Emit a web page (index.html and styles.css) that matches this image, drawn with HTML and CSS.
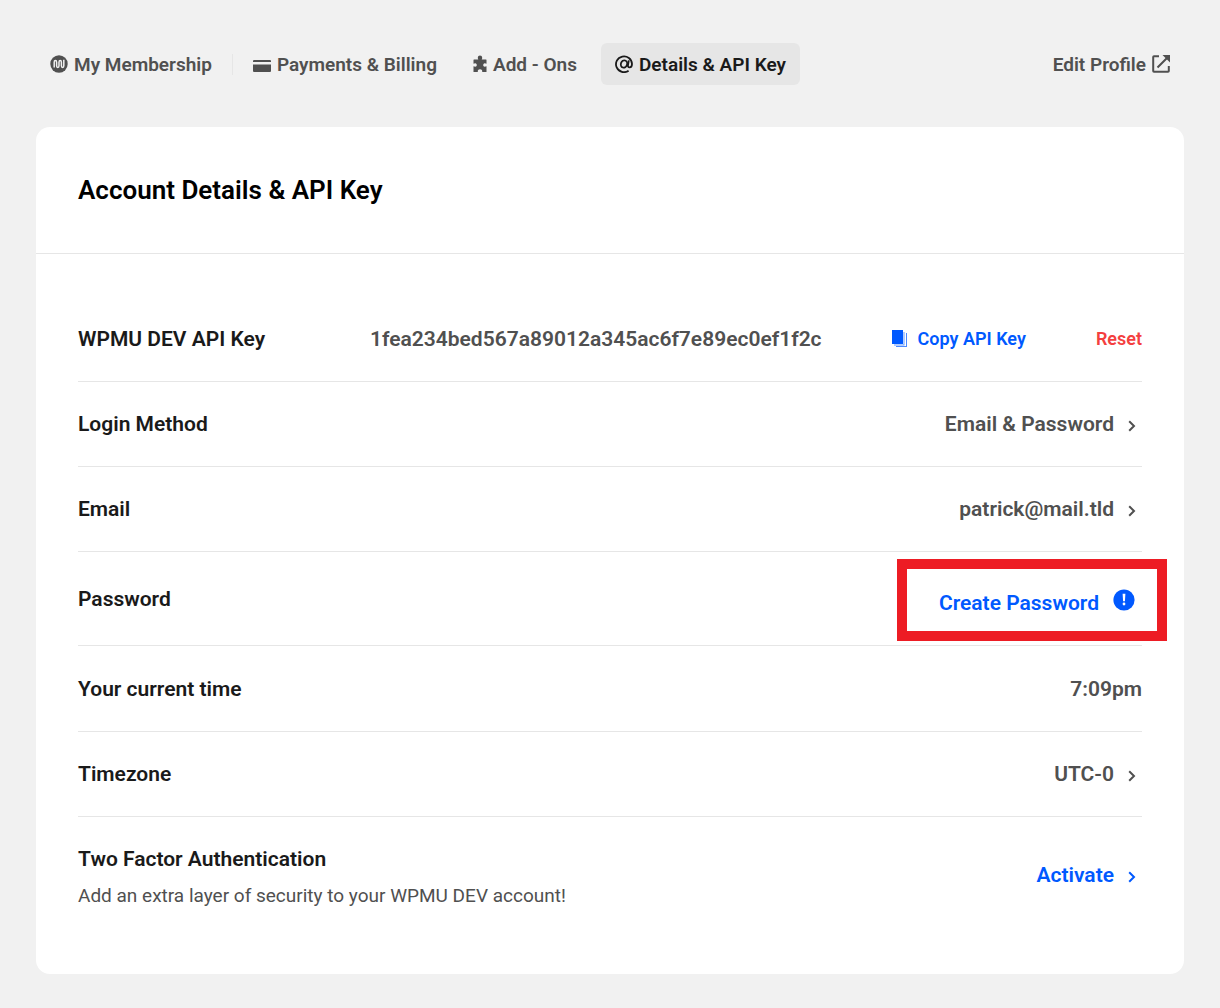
FILE: index.html
```html
<!DOCTYPE html>
<html lang="en">
<head>
    <meta charset="UTF-8">
    <meta name="viewport" content="width=device-width, initial-scale=1.0">
    <title>Account Details &amp; API Key</title>
    <link rel="stylesheet" href="styles.css">
</head>
<body>
    <nav class="navbar">
        <a class="tab" href="#membership">
            <svg width="18" height="18" viewBox="0 0 18 18"><circle cx="9" cy="9" r="8.7" fill="currentColor"/><path d="M4.2 12.5V7.2q0-1.7 1.2-1.7t1.2 1.7v3.6q0 1.7 1.2 1.7T9 10.800V7.200q0-1.700 1.200-1.700t1.200 1.700v3.600q0 1.700 1.200 1.700t1.200-1.700V4.800" fill="none" stroke="#f1f1f1" stroke-width="1.500"/></svg>
            My Membership
        </a>
        <span class="divider"></span>
        <a class="tab" href="#billing">
            <svg width="18" height="18" viewBox="0 0 18 18"><path d="M1 5h16q1 0 1 1v1H0V6q0-1 1-1zM0 9.500h18V16q0 1-1 1H1q-1 0-1-1z" fill="currentColor"/></svg>
            Payments &amp; Billing
        </a>
        <a class="tab tab-addons" href="#addons">
            <svg width="14" height="18" viewBox="0 0 14 18"><path d="M5.300 4.600Q4.800 3.800 4.800 2.400 4.900.4 7 .4t2.200 2q0 1.400-.5 2.200H13q.5 0 .5.500v3.600q-1.700-.6-2.500-.2-.8.500-.8 1.500t.8 1.500q.8.400 2.500-.2V17H9.200q.4-2.800-2.200-2.800T4.800 17H.5v-5.700q1.700.6 2.500.2.800-.5.800-1.500T3 8.500Q2.200 8.100.5 8.700V5.100q0-.5.500-.5z" fill="currentColor"/></svg>
            Add - Ons
        </a>
        <a class="tab active" href="#details">
            <svg width="18" height="18" viewBox="0 0 18 18" fill="none" stroke="currentColor" stroke-width="1.800"><path d="M13.600 15.700A8 7.900 0 1 1 17 9q0 3.300-2.400 3.300-2 0-1.600-2.300l.8-4.600"/><ellipse cx="9" cy="9" rx="3.100" ry="3.700" transform="rotate(18 9 9)"/></svg>
            Details &amp; API Key
        </a>
        <a class="tab profile" href="#profile">
            Edit Profile
            <svg width="18" height="18" viewBox="0 0 18 18"><path d="M7 1.200H2Q1.200 1.200 1.200 2v14q0 .8.800.8h14q.8 0 .8-.8v-5M5.500 12.500L16 2" fill="none" stroke="currentColor" stroke-width="2"/><path d="M10.500 0H18v7.500z" fill="currentColor"/></svg>
        </a>
    </nav>

    <main class="card">
        <header class="card_header">
            <h1>Account Details &amp; API Key</h1>
        </header>
        <div class="card_body">
            <div class="row row_key">
                <h2>WPMU DEV API Key</h2>
                <span class="value api_key">1fea234bed567a89012a345ac6f7e89ec0ef1f2c</span>
                <button type="button" class="small copy">
                    <svg width="16" height="18" viewBox="0 0 16 18" fill="currentColor"><path d="M0 0h11v14H0z"/><path d="M11.500 2h1v13.500H2v-1h9.500z" opacity=".6"/><path d="M14 3h1v14H4v-1h10z" opacity=".7"/></svg>
                    Copy API Key
                </button>
                <button type="button" class="small reset">Reset</button>
            </div>
            <div class="row">
                <h2>Login Method</h2>
                <button type="button" class="value">Email &amp; Password
                    <svg class="arrow" width="8" height="12" viewBox="0 0 8 12"><path d="M1.200 1.200L6 6l-4.800 4.800"/></svg>
                </button>
            </div>
            <div class="row">
                <h2>Email</h2>
                <button type="button" class="value">patrick@mail.tld
                    <svg class="arrow" width="8" height="12" viewBox="0 0 8 12"><path d="M1.200 1.200L6 6l-4.800 4.800"/></svg>
                </button>
            </div>
            <div class="row row_password">
                <h2>Password</h2>
                <button type="button" class="value blue create">Create Password
                    <svg width="22" height="22" viewBox="0 0 22 22"><circle cx="11" cy="11" r="10.600" fill="currentColor"/><path d="M9.600 4.800h2.800l-.5 7.400h-1.800z" fill="#fff"/><circle cx="11" cy="15" r="1.400" fill="#fff"/></svg>
                </button>
            </div>
            <div class="row row_time">
                <h2>Your current time</h2>
                <span class="value">7:09pm</span>
            </div>
            <div class="row">
                <h2>Timezone</h2>
                <button type="button" class="value">UTC-0
                    <svg class="arrow" width="8" height="12" viewBox="0 0 8 12"><path d="M1.200 1.200L6 6l-4.800 4.800"/></svg>
                </button>
            </div>
            <div class="row">
                <div class="two_factor">
                    <h2>Two Factor Authentication</h2>
                    <p>Add an extra layer of security to your WPMU DEV account!</p>
                </div>
                <button type="button" class="value blue">Activate
                    <svg class="arrow" width="8" height="12" viewBox="0 0 8 12"><path d="M1.200 1.200L6 6l-4.800 4.800"/></svg>
                </button>
            </div>
        </div>
    </main>
</body>
</html>
```
FILE: styles.css
```css
* {
    box-sizing: border-box;
}

body {
    font-family: Roboto, "Liberation Sans", sans-serif;
    margin: 0;
    padding: 43px 36px 34px;
    background-color: #f1f1f1;
    color: #505050;
}

h1, h2, p {
    margin: 0;
}

button {
    font-family: inherit;
    padding: 0;
    border: 0;
    background: none;
    cursor: pointer;
}

svg {
    flex: none;
}

.navbar {
    display: flex;
    align-items: center;
    margin-bottom: 42px;
}

.tab {
    display: flex;
    align-items: center;
    gap: 6px;
    height: 42px;
    padding: 0 14px;
    border-radius: 6px;
    font-size: 19px;
    font-weight: 600;
    color: #505050;
    text-decoration: none;
    white-space: nowrap;
}

.tab-addons {
    margin: 0 10px 0 8px;
}

.divider {
    width: 1px;
    height: 21px;
    margin: 0 6px;
    background-color: #e6e6e6;
}

.tab.active {
    background-color: #e6e6e6;
    color: #1a1a1a;
}

.profile {
    margin-left: auto;
}

.card {
    background-color: #fff;
    border-radius: 14px;
}

.card_header {
    padding: 42px;
    border-bottom: 1px solid #e6e6e6;
}

h1 {
    font-size: 26px;
    line-height: 42px;
    font-weight: 600;
    color: #000;
}

.card_body {
    padding: 42px;
}

.row {
    display: flex;
    align-items: center;
    justify-content: space-between;
    min-height: 85px;
    border-bottom: 1px solid #e6e6e6;
}

.row:last-child {
    min-height: 115px;
    border-bottom: 0;
}

.row_key,
.row_time {
    min-height: 86px;
}

.row_password {
    min-height: 94px;
}

h2 {
    font-size: 21px;
    line-height: 28px;
    font-weight: 600;
    color: #1a1a1a;
}

p {
    margin-top: 10px;
    font-size: 19px;
    line-height: 26px;
}

.two_factor {
    padding-top: 4px;
}

.value {
    display: flex;
    align-items: center;
    gap: 14px;
    font-size: 21px;
    line-height: 28px;
    font-weight: 600;
    color: #505050;
}

.api_key {
    margin-left: auto;
}

.small {
    display: flex;
    align-items: center;
    gap: 10px;
    margin-left: 70px;
    font-size: 18px;
    line-height: 28px;
    font-weight: 600;
}

.arrow {
    margin: 4px 6px 0 0;
    fill: none;
    stroke: currentColor;
    stroke-width: 2;
}

.copy,
.blue {
    color: #0059ff;
}

.reset {
    color: #f43f3f;
}

/* highlight frame drawn over the row */
.create {
    position: relative;
    align-items: flex-start;
    margin-right: 7px;
    padding-top: 8px;
}

.create::after {
    content: "";
    position: absolute;
    inset: -22px -32px -24px -42px;
    border: 10px solid #ed1c24;
}
```
